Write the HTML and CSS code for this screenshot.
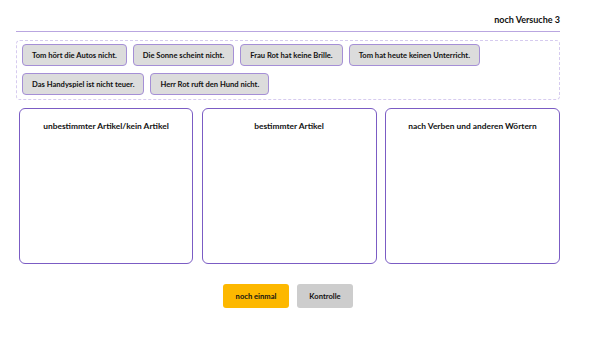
FILE: index.html
```html
<!DOCTYPE html>
<html lang="de">
<head>
	<meta charset=utf-8>
	<meta name="viewport" content="width=device-width, initial-scale=1.0">
	<link rel="stylesheet" href="styles.css">
	<title>Artikel zuordnen</title>
</head>
<body>
	<div class=page>
		<header class=top>noch Versuche 3</header>
		<div class=pool>
			<span class=chip>Tom hört die Autos nicht.</span>
			<span class=chip>Die Sonne scheint nicht.</span>
			<span class=chip>Frau Rot hat keine Brille.</span>
			<span class=chip>Tom hat heute keinen Unterricht.</span>
			<span class=chip>Das Handyspiel ist nicht teuer.</span>
			<span class=chip>Herr Rot ruft den Hund nicht.</span>
		</div>
		<div class=columns>
			<div class=col><h2>unbestimmter Artikel/kein Artikel</h2></div>
			<div class=col><h2>bestimmter Artikel</h2></div>
			<div class=col><h2>nach Verben und anderen Wörtern</h2></div>
		</div>
		<div class=actions>
			<button class="btn again">noch einmal</button>
			<button class="btn check">Kontrolle</button>
		</div>
	</div>
</body>
</html>
```

FILE: styles.css
```css
body {
	margin: 0;
	font-family: Lato, "Noto Sans", sans-serif;
	color: #111;
	background: #fff;
}
.page {
	width: 544px;
	margin: 0 16px;
}
.top {
	text-align: right;
	font-size: 9px;
	font-weight: 700;
	padding: 14px 0 5px;
	line-height: 12px;
	border-bottom: 1px solid #b9a6e0;
}
.pool {
	margin-top: 8px;
	height: 51px;
	padding: 3px 5px 4px;
	border: 1px dashed #d6cbef;
	border-radius: 4px;
	display: flex;
	flex-wrap: wrap;
	align-content: flex-start;
	gap: 7px 6px;
}
.chip {
	height: 20px;
	line-height: 20px;
	padding: 0 9px;
	font-size: 7.6px;
	font-weight: 700;
	background: #dcdcdc;
	border: 1px solid #a58fd6;
	border-radius: 4px;
}
.columns {
	margin-top: 8px;
	padding-left: 3px;
	display: grid;
	grid-template-columns: 174px 175px 175px;
	gap: 8.5px;
}
.col {
	height: 154px;
	border: 1px solid #7b5cc4;
	border-radius: 6px;
}
.col h2 {
	margin: 0;
	padding-top: 11px;
	text-align: center;
	font-size: 8.4px;
	font-weight: 700;
	line-height: 12px;
}
.actions {
	margin-top: 20px;
	display: flex;
	justify-content: center;
	gap: 8px;
}
.btn {
	height: 24px;
	border: none;
	border-radius: 3px;
	font-family: inherit;
	font-size: 7.6px;
	font-weight: 700;
	white-space: nowrap;
	color: #111;
	padding: 0;
}
.again {
	width: 66px;
	background: #fdb800;
}
.check {
	width: 56px;
	background: #cdcdcd;
}
```
